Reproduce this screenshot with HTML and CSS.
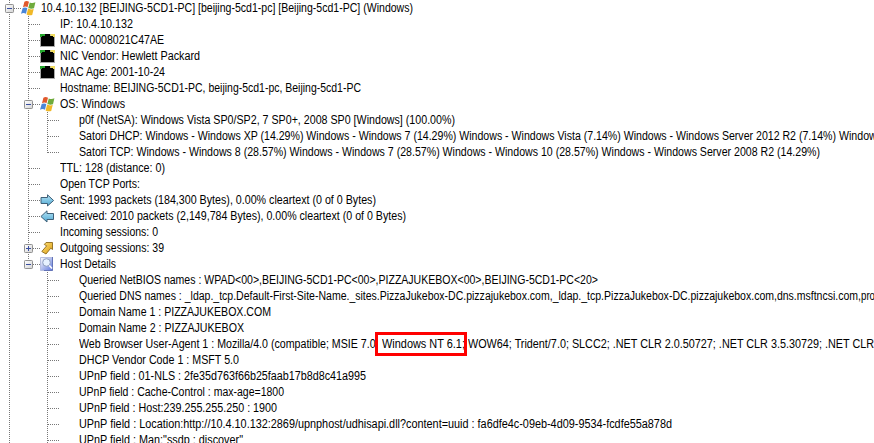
FILE: index.html
```html
<!DOCTYPE html>
<html lang="en">
<head>
<meta charset="utf-8">
<title>Hosts</title>
<link rel="stylesheet" href="styles.css">
</head>
<body>
<svg class="defs" width="0" height="0">
  <defs>
    <linearGradient id="gb" x1="0" y1="0" x2="0" y2="1"><stop offset="0" stop-color="#b5e3f5"/><stop offset="1" stop-color="#4fa9d3"/></linearGradient>
    <linearGradient id="gy" x1="0" y1="0" x2="1" y2="1"><stop offset="0" stop-color="#ffe27a"/><stop offset="1" stop-color="#d99a10"/></linearGradient>
    <linearGradient id="gd" x1="0" y1="0" x2="1" y2="1"><stop offset="0" stop-color="#fff"/><stop offset="1" stop-color="#5f78dc"/></linearGradient>
    <linearGradient id="gx" x1="0" y1="0" x2="1" y2="1"><stop offset="0" stop-color="#fff"/><stop offset="1" stop-color="#d4d4d4"/></linearGradient>
    <symbol id="v" viewBox="0 0 21 16"><path class="dot" d="M9.5 0V16"/></symbol>
    <symbol id="t" viewBox="0 0 21 16"><path class="dot" d="M9.5 0V16M10 8.5H21"/></symbol>
    <symbol id="l" viewBox="0 0 21 16"><path class="dot" d="M9.5 0V9M10 8.5H21"/></symbol>
    <symbol id="box" viewBox="0 0 21 16"><path class="dot" d="M14 8.5H21"/><rect x="5.500" y="4.500" width="8" height="8" rx=".8" fill="url(#gx)" stroke="#919191"/><path d="M7 8.500H12" stroke="#3a4fa0"/></symbol>
    <symbol id="m" viewBox="0 0 21 16"><path class="dot" d="M9.500 0V16"/><use href="#box" width="21" height="16"/></symbol>
    <symbol id="p" viewBox="0 0 21 16"><path class="dot" d="M9.500 0V16"/><use href="#box" width="21" height="16"/><path d="M9.500 6V11" stroke="#3a4fa0"/></symbol>
    <symbol id="e" viewBox="0 0 21 16"><path class="dot" d="M9.500 0V4"/><use href="#box" width="21" height="16"/></symbol>
    <symbol id="win" viewBox="0 0 16 16"><path d="M3.400 1.800Q5.500.4 8 1.800L6.500 7.200Q4.500 6 2 7.200Z" fill="#e0582c"/><path d="M8.800 2.400Q11.400 3.800 14.400 2.300L13 8.200Q10 9.300 7.300 7.800Z" fill="#6fab3c"/><path d="M1.700 8Q4 6.900 6.300 8L5 13.700Q2.600 12.400 0 13.700Z" fill="#4a86d8"/><path d="M7.100 8.600Q9.800 10 12.700 8.900L11.200 14.900Q8.400 16 5.600 14.400Z" fill="#f0b828"/></symbol>
    <symbol id="nic" viewBox="0 0 16 16"><path fill="#a9a9a9" d="M0 2H15V15H0Z"/><path d="M1 5H2V4H5V2H10V4H13V5H14V14H1Z" fill="#000"/><path d="M0 2H5V4H2V5H0Z" fill="#25a52d"/><path d="M10.500 2H15V5H13V4H10.500Z" fill="#f0dc60"/></symbol>
    <symbol id="r" viewBox="0 0 16 16"><path d="M1 5.500H7.500V2.800L13.600 8.500L7.500 14V11.500H1Z" fill="url(#gb)" stroke="#3f6078"/></symbol>
    <symbol id="lf" viewBox="0 0 16 16"><path d="M13.500 5.500H7V2.800L.9 8.500L7 14V11.500H13.500Z" fill="url(#gb)" stroke="#3f6078"/></symbol>
    <symbol id="up" viewBox="0 0 16 16"><path d="M4.300 4.500L6 2.500H12.500V9.500L10.800 8.200L6 14L1.800 11.500L6.700 5.800Z" fill="url(#gy)" stroke="#8d6a1c" stroke-width=".9"/></symbol>
    <symbol id="det" viewBox="0 0 16 16"><path d="M.5 1.500H12.500V14.500H.5Z" fill="url(#gd)" stroke="#b7bfe0"/><path d="M12.500 1V14.500H4" stroke="#6474b8" fill="none"/><circle cx="6.500" cy="6.500" r="3.800" fill="#e6f1ff" stroke="#8f9fbf"/><path d="M9.300 9.500L12 12.500" stroke="#fff" stroke-width="1.600"/></symbol>
  </defs>
</svg>
<main class="tree" id="tree"></main>
<div class="mark"></div>
<script src="tree.js"></script>
</body>
</html>
```
FILE: styles.css
```css
* { box-sizing: border-box; }
body { margin: 0; background: #fff; overflow: hidden; width: 874px; height: 443px; }
.defs { position: absolute; }
.dot { stroke: #777; stroke-width: 1; stroke-dasharray: 1 1; fill: none; }
.tree { display: flex; flex-direction: column; height: 443px; overflow: hidden; }
.row { display: flex; flex: 0 0 16px; height: 16px; white-space: pre; }
.cell { flex: 0 0 19px; width: 19px; min-width: 0; height: 16px; }
.cell svg { display: block; width: 21px; height: 16px; }
.icon { flex: 0 0 22px; height: 16px; padding-left: 2px; }
.icon svg { display: block; width: 16px; height: 16px; }
.label { flex: none; font: 12px/16px "Liberation Sans", Arial, sans-serif; color: #000; transform-origin: 0 0; }
.mark { position: absolute; left: 375px; top: 332px; width: 92px; height: 24px; border: 3px solid #f00; }
```
FILE: tree.js
```js
// Each row: indent cells, icon, then pairs of text and its width in px.
const rows = [
  ["m", "win", "10.4.10.132 [BEIJING-5CD1-PC] [beijing-5cd1-pc] [Beijing-5cd1-PC] (Windows)", 372],
  ["vt", "", "IP: 10.4.10.132", 73],
  ["vt", "nic", "MAC: 0008021C47AE", 104],
  ["vt", "nic", "NIC Vendor: Hewlett Packard", 140],
  ["vt", "nic", "MAC Age: 2001-10-24", 105],
  ["vt", "", "Hostname: BEIJING-5CD1-PC, beijing-5cd1-pc, Beijing-5cd1-PC", 301],
  ["vm", "win", "OS: Windows", 65],
  ["vvt", "", "p0f (NetSA): Windows Vista SP0/SP2, 7 SP0+, 2008 SP0 [Windows] (100.00%)", 376],
  ["vvt", "", "Satori DHCP: Windows - Windows XP (14.29%) Windows - Windows 7 (14.29%) Windows - Windows Vista (7.14%) Windows - Windows Server 2012 R2 (7.14%)", 757, " Windows", 46],
  ["vvl", "", "Satori TCP: Windows - Windows 8 (28.57%) Windows - Windows 7 (28.57%) Windows - Windows 10 (28.57%) Windows - Windows Server 2008 R2 (14.29%)", 741],
  ["vt", "", "TTL: 128 (distance: 0)", 105],
  ["vt", "", "Open TCP Ports:", 80],
  ["vt", "r", "Sent: 1993 packets (184,300 Bytes), 0.00% cleartext (0 of 0 Bytes)", 316],
  ["vt", "lf", "Received: 2010 packets (2,149,784 Bytes), 0.00% cleartext (0 of 0 Bytes)", 346],
  ["vt", "", "Incoming sessions: 0", 98],
  ["vp", "up", "Outgoing sessions: 39", 104],
  ["ve", "det", "Host Details", 56],
  ["v t", "", "Queried NetBIOS names : WPAD<00>,BEIJING-5CD1-PC<00>,PIZZAJUKEBOX<00>,BEIJING-5CD1-PC<20>", 519],
  ["v t", "", "Queried DNS names : _ldap._tcp.Default-First-Site-Name._sites.PizzaJukebox-DC.pizzajukebox.com,_ldap._tcp.PizzaJukebox-DC.pizzajukebox.com,dns.msftncsi.com,", 782, "pro", 14],
  ["v t", "", "Domain Name 1 : PIZZAJUKEBOX.COM", 192],
  ["v t", "", "Domain Name 2 : PIZZAJUKEBOX", 165],
  ["v t", "", "Web Browser User-Agent 1 : Mozilla/4.0 (compatible; MSIE 7.0; ", 302.5, "Windows NT 6.1; ", 86, "WOW64; Trident/7.0; SLCC2; .NET CLR 2.0.50727; .NET CLR 3.5.30729;", 354, " .NET CLR", 52],
  ["v t", "", "DHCP Vendor Code 1 : MSFT 5.0", 160],
  ["v t", "", "UPnP field : 01-NLS : 2fe35d763f66b25faab17b8d8c41a995", 287],
  ["v t", "", "UPnP field : Cache-Control : max-age=1800", 205],
  ["v t", "", "UPnP field : Host:239.255.255.250 : 1900", 198],
  ["v t", "", "UPnP field : Location:http://10.4.10.132:2869/upnphost/udhisapi.dll?content=uuid : fa6dfe4c-09eb-4d09-9534-fcdfe55a878d", 593],
  ["v t", "", "UPnP field : Man:\"ssdp : discover\"", 164],
];
const svg = (id) => (id.trim() ? `<svg><use href="#${id}"/></svg>` : "");
const tree = document.getElementById("tree");
for (const [cells, icon, ...parts] of rows) {
  const row = document.createElement("div");
  row.className = "row";
  row.innerHTML =
    [...cells].map((c) => `<span class="cell">${svg(c)}</span>`).join("") +
    `<span class="icon">${svg(icon)}</span>`;
  tree.append(row);
  for (let i = 0; i < parts.length; i += 2) {
    const label = document.createElement("span");
    label.className = "label";
    label.textContent = parts[i];
    row.append(label);
    const natural = label.getBoundingClientRect().width;
    label.style.width = parts[i + 1] + "px";
    label.style.transform = `scaleX(${parts[i + 1] / natural})`;
  }
}
```
